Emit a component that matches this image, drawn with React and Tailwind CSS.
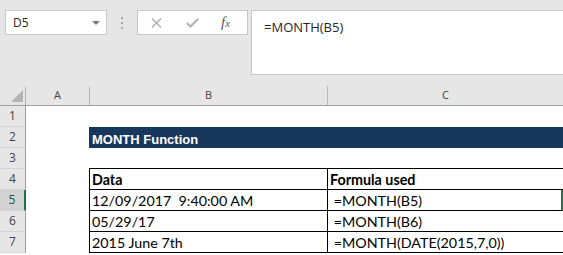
import React from "react"

const cellFont = { fontFamily: "Lato, 'Open Sans', sans-serif" }

const rows = [
  { n: 1 },
  { n: 2, band: true },
  { n: 3, tableTop: true },
  { n: 4, b: "Data", c: "Formula used", bold: true, table: true },
  { n: 5, b: "12/09/2017  9:40:00 AM", c: " =MONTH(B5)", table: true, active: true },
  { n: 6, b: "05/29/17", c: " =MONTH(B6)", table: true },
  { n: 7, b: "2015 June 7th", c: " =MONTH(DATE(2015,7,0))", table: true },
]

export default function App() {
  return (
    <div className="w-[563px] h-[255px] overflow-hidden bg-white" style={{ fontFamily: "'Open Sans', sans-serif" }}>
      {/* toolbar */}
      <div className="h-[85px] bg-[#e6e6e6] flex items-start pt-[10px]">
        <div className="ml-[5px] w-[102px] h-[25px] border border-[#c6c6c6] bg-white flex items-center justify-between pl-[7px] pr-[6px]">
          <span className="text-[12px] leading-none text-[#262626]">D5</span>
          <svg width="8" height="4" viewBox="0 0 8 4">
            <polygon points="0,0 8,0 4,4" fill="#7a7a7a" />
          </svg>
        </div>
        <div className="ml-[14px] mt-[7px] flex flex-col gap-[3px]">
          <div className="w-[2px] h-[2px] bg-[#a6a6a6]" />
          <div className="w-[2px] h-[2px] bg-[#a6a6a6]" />
          <div className="w-[2px] h-[2px] bg-[#a6a6a6]" />
        </div>
        <div className="ml-[14px] w-[111px] h-[25px] border border-[#c6c6c6] bg-white flex items-center pl-[13px]">
          <svg width="11" height="10" viewBox="0 0 11 10">
            <path d="M1 0.5 L10 9.5 M10 0.5 L1 9.5" stroke="#a8a8a8" strokeWidth="1.2" fill="none" />
          </svg>
          <svg className="ml-[24px]" width="13" height="10" viewBox="0 0 13 10">
            <path d="M0.8 5 L4.5 8.5 L12.2 0.8" stroke="#b3b3b3" strokeWidth="2" fill="none" />
          </svg>
          <span className="ml-[22px] text-[15px] leading-none italic text-[#595959]" style={{ fontFamily: "'Liberation Serif', serif" }}>
            f<span className="text-[11px]">x</span>
          </span>
        </div>
        <div className="ml-[3px] flex-1 h-[65px] border border-r-0 border-[#c6c6c6] bg-white pl-[12px] pt-[3px]">
          <span className="text-[13px] leading-[18px] text-[#262626]">=MONTH(B5)</span>
        </div>
      </div>

      {/* column headers */}
      <div className="h-[21px] bg-[#e6e6e6] border-b border-[#9e9e9e] flex items-end text-[11px] text-[#444]">
        <div className="w-[26px] h-[19px] border-r border-[#b8b8b8] flex items-end justify-end pr-[2px] pb-[3px]">
          <svg width="12" height="12" viewBox="0 0 12 12">
            <polygon points="12,0 12,12 0,12" fill="#b4b4b4" />
          </svg>
        </div>
        <div className="w-[64px] h-[19px] border-r border-[#b8b8b8] flex items-center justify-center">A</div>
        <div className="w-[238px] h-[19px] border-r border-[#b8b8b8] flex items-center justify-center">B</div>
        <div className="flex-1 h-[19px] flex items-center justify-center">C</div>
      </div>

      {/* body rows */}
      {rows.map((r) => (
        <div key={r.n} className="h-[21px] flex">
          <div
            className={
              r.active
                ? "w-[26px] h-full bg-[#d2d2d2] border-r-2 border-r-[#217346] border-b border-b-[#d4d4d4] flex items-center justify-center text-[12px] text-[#1f5c3c]"
                : "w-[26px] h-full bg-[#e6e6e6] border-r border-r-[#9e9e9e] border-b border-b-[#d4d4d4] flex items-center justify-center text-[12px] text-[#444]"
            }
          >
            {r.n}
          </div>
          <div className="w-[63px] h-full" />
          {r.band ? (
            <div className="flex-1 h-full bg-[#18375d] flex items-end pl-[3px]">
              <span className="text-[13px] leading-[16px] font-bold text-white" style={{ fontFamily: "'Liberation Sans', Arial, sans-serif" }}>
                MONTH Function
              </span>
            </div>
          ) : r.tableTop ? (
            <div className="flex-1 h-full border-b border-black" />
          ) : r.table ? (
            <>
              <div className="w-[238px] h-full border-l border-b border-black flex items-end pl-[2px]" style={cellFont}>
                <span className={r.bold ? "text-[14.3px] leading-[18px] font-bold text-black whitespace-pre" : "text-[14.3px] leading-[18px] text-black whitespace-pre"}>
                  {r.b}
                </span>
              </div>
              <div
                className={
                  r.active
                    ? "flex-1 h-full border-l border-b border-black border-r-2 border-r-[#217346] flex items-end pl-[2px]"
                    : "flex-1 h-full border-l border-b border-black flex items-end pl-[2px]"
                }
                style={cellFont}
              >
                <span className={r.bold ? "text-[14.3px] leading-[18px] font-bold text-black whitespace-pre" : "text-[14.3px] leading-[18px] text-black whitespace-pre"}>
                  {r.c}
                </span>
              </div>
            </>
          ) : (
            <div className="flex-1 h-full" />
          )}
        </div>
      ))}
    </div>
  )
}
